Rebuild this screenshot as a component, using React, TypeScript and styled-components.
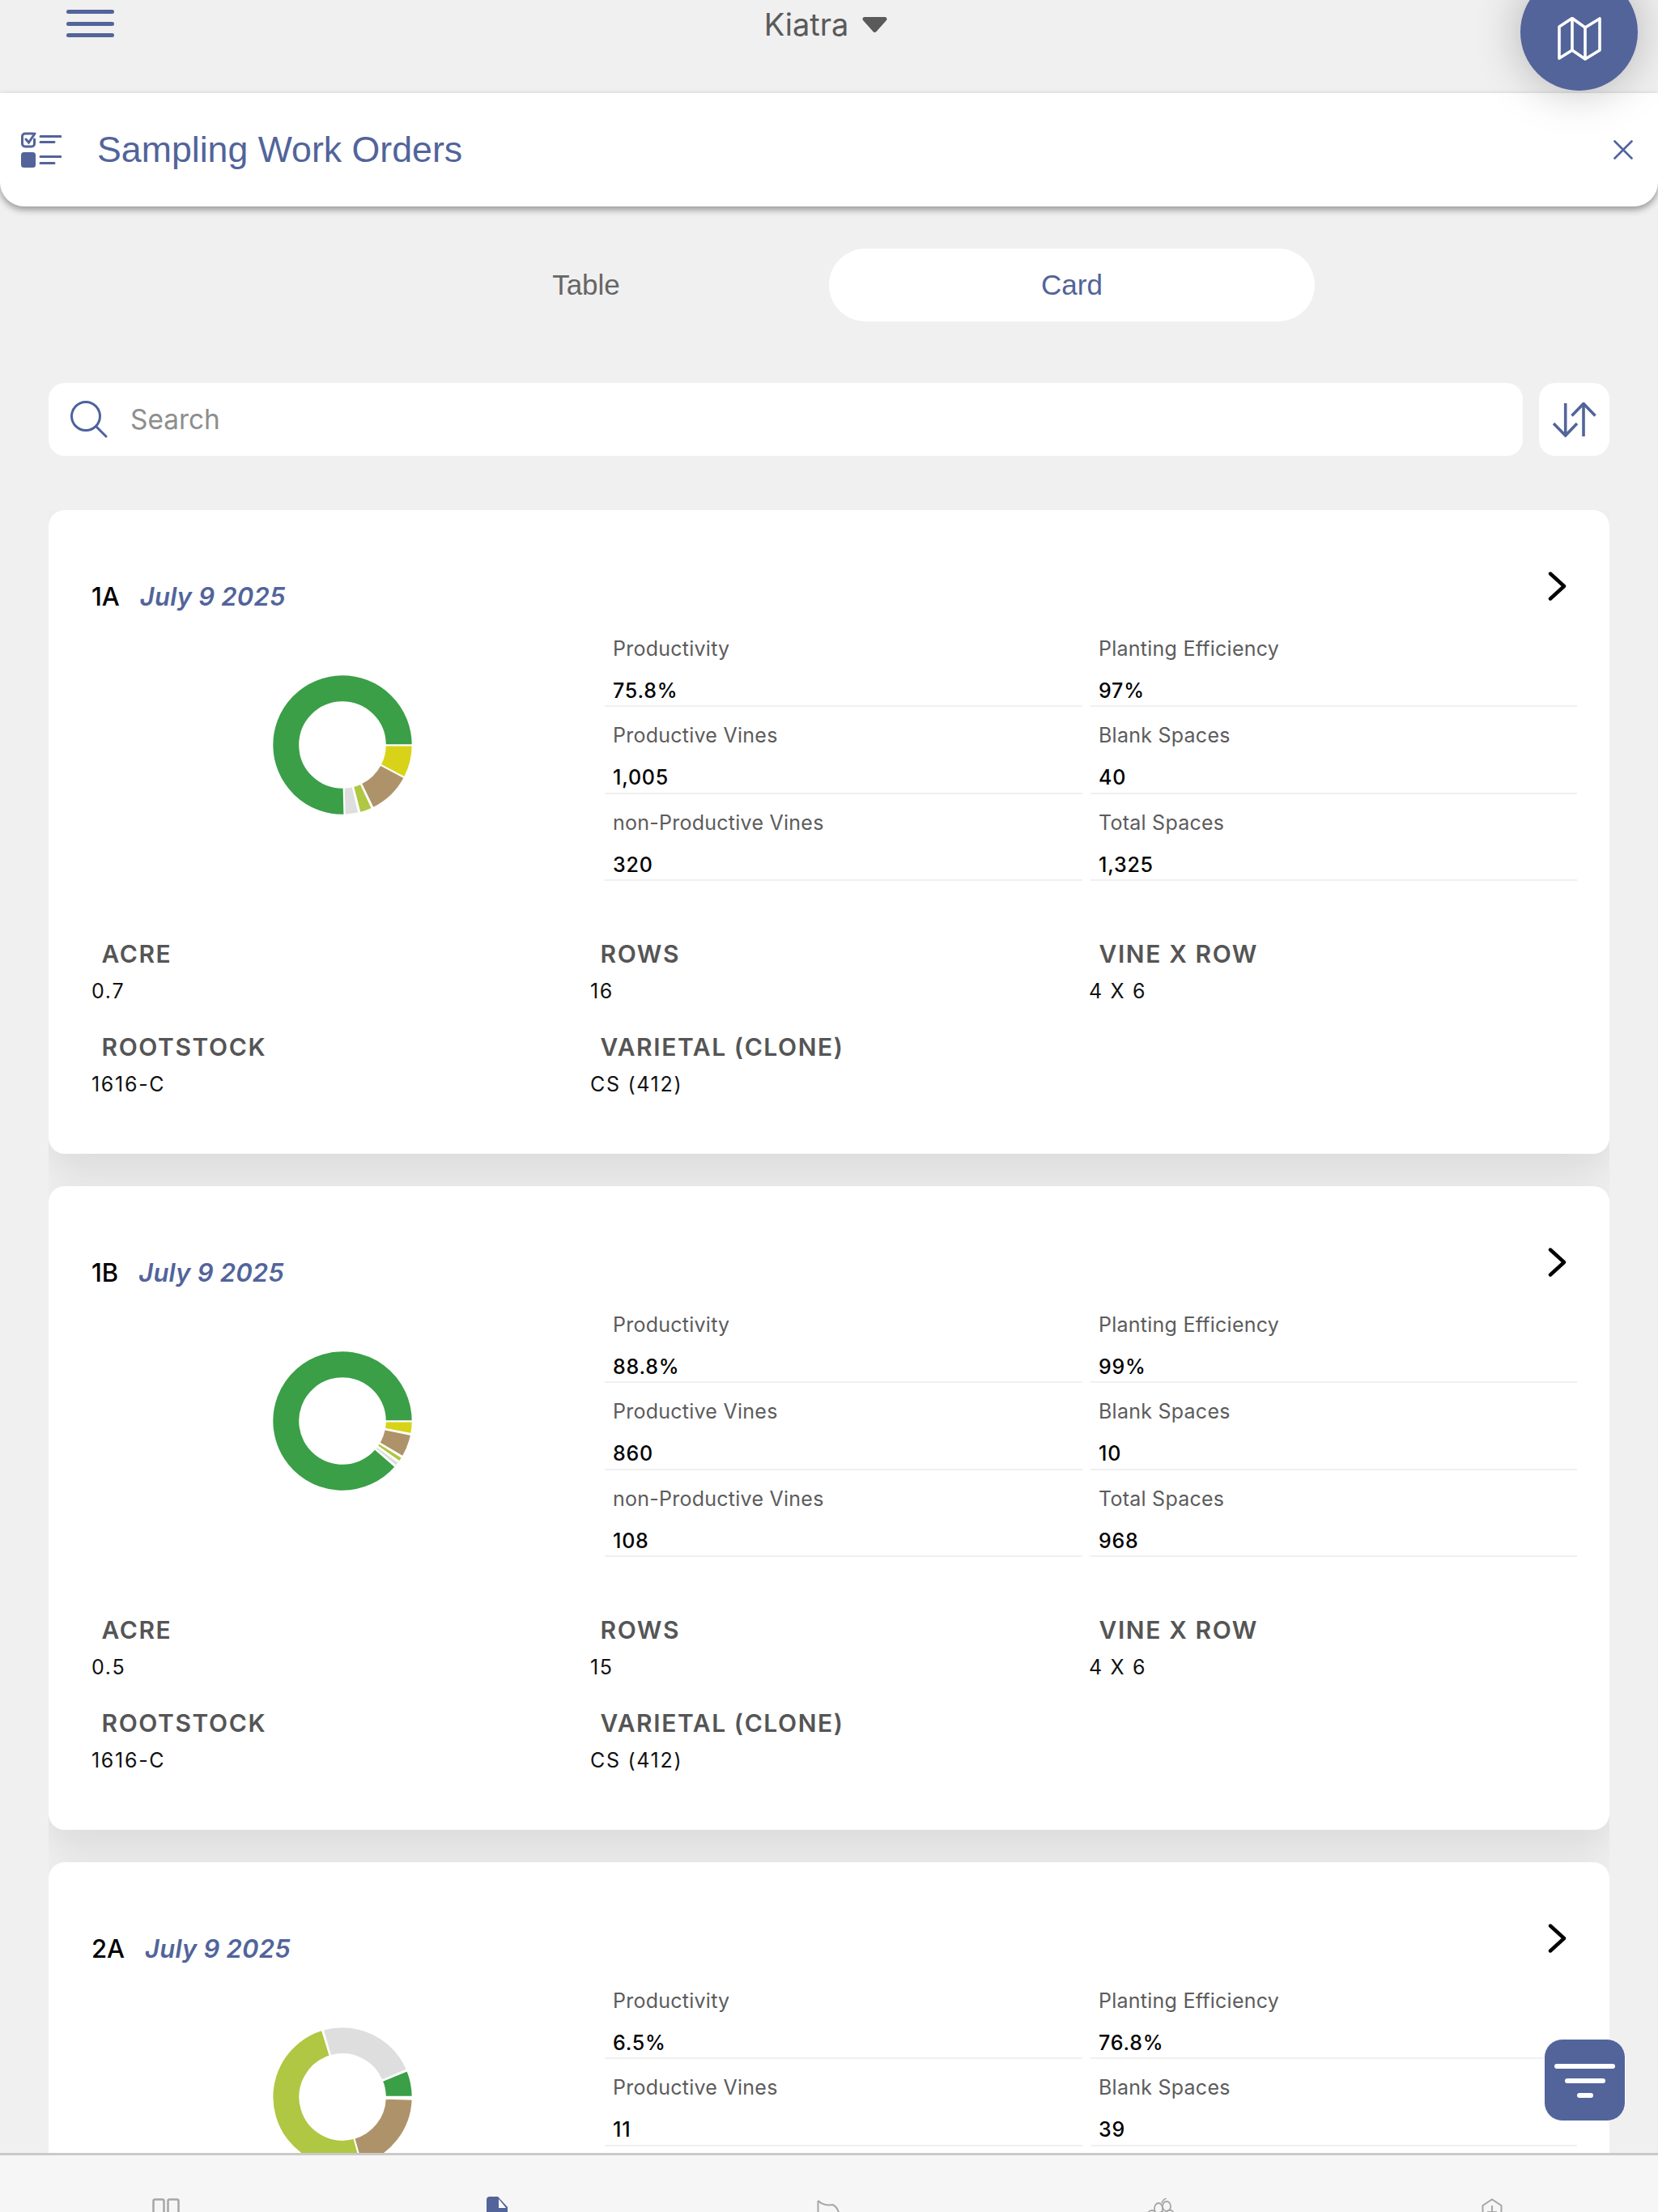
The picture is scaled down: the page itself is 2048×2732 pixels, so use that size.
import {FC} from "react";
import styled, {createGlobalStyle} from "styled-components";

const BLUE = "#52649a";
const UI_FONT = `Inter, "Noto Sans", sans-serif`;

const GlobalStyle = createGlobalStyle`
	html, body {
		margin: 0;
		padding: 0;
		background: #f0f0f0;
	}
	* {
		box-sizing: border-box;
	}
`;

// Page frame
const Page = styled.div`
	position: relative;
	width: 2048px;
	height: 2732px;
	overflow: hidden;
	display: flex;
	flex-direction: column;
	background: #f0f0f0;
	font-family: ${UI_FONT};
`;

const TopBar = styled.div`
	height: 115px;
	flex: none;
	display: grid;
	grid-template-columns: 1fr auto 1fr;
	padding: 12px 0 0 82px;
`;

const Hamburger = styled.div`
	width: 59px;
	display: flex;
	flex-direction: column;
	gap: 9.5px;

	span {
		height: 5px;
		border-radius: 3px;
		background: ${BLUE};
	}
`;

const FarmPicker = styled.div`
	display: flex;
	align-items: flex-start;
	gap: 17px;
	padding-right: 90px;
	font-size: 38px;
	line-height: 36px;
	color: #5a5a5a;

	svg {
		margin-top: 9px;
	}
`;

const MapButton = styled.div`
	position: absolute;
	z-index: 5;
	top: -33px;
	left: 1878px;
	width: 145px;
	height: 145px;
	border-radius: 50%;
	background: ${BLUE};
	box-shadow: 0 0 56px rgba(0, 0, 0, 0.26);
	display: flex;
	align-items: center;
	justify-content: center;
	padding-top: 17px;
`;

const Header = styled.div`
	height: 140px;
	flex: none;
	display: flex;
	align-items: center;
	padding: 0 31px 0 26px;
	background: #fff;
	border-radius: 0 0 30px 30px;
	box-shadow: 0 4px 9px rgba(0, 0, 0, 0.38);
`;

const HeaderTitle = styled.div`
	flex: 1;
	margin-left: 44px;
	font-family: "Liberation Sans", Arial, sans-serif;
	font-size: 44.7px;
	color: ${BLUE};
`;

const Tabs = styled.div`
	flex: none;
	width: 1200px;
	height: 90px;
	margin: 52px auto 0;
	display: grid;
	grid-template-columns: 1fr 1fr;
`;

const Tab = styled.div<{$active?: boolean}>`
	display: flex;
	align-items: center;
	justify-content: center;
	border-radius: 45px;
	font-family: "Liberation Sans", Arial, sans-serif;
	font-size: 35px;
	color: ${(p) => (p.$active ? BLUE : "#666")};
	background: ${(p) => (p.$active ? "#fff" : "transparent")};
`;

const SearchRow = styled.div`
	flex: none;
	height: 90px;
	margin: 76px 60px 0;
	display: flex;
	gap: 20px;
`;

const SearchBox = styled.div`
	flex: 1;
	display: flex;
	align-items: center;
	gap: 28px;
	padding-left: 27px;
	background: #fff;
	border-radius: 20px;
	font-size: 33.4px;
	color: #8e8e8e;
`;

const SortButton = styled.div`
	width: 87px;
	display: flex;
	align-items: center;
	justify-content: center;
	background: #fff;
	border-radius: 20px;
`;

// Card list
const List = styled.div`
	flex: 1;
	min-height: 0;
	margin: 67px 60px 0;
	overflow: hidden;
	display: flex;
	flex-direction: column;
	gap: 40px;
`;

const Card = styled.div`
	flex: none;
	min-height: 795px;
	padding: 76px 40px 70.5px 53px;
	background: #fff;
	border-radius: 20px;
	box-shadow: 0 24px 50px rgba(0, 0, 0, 0.09);
`;

const TitleRow = styled.div`
	height: 59.5px;
	display: flex;
	justify-content: space-between;
	padding-right: 13px;
`;

const Title = styled.div`
	display: flex;
	gap: 25px;
	padding-top: 11px;
	font-size: 31px;
	line-height: 40px;
	font-weight: 500;
	color: #000;
`;

const TitleDate = styled.span`
	font-weight: 600;
	font-style: italic;
	letter-spacing: 0.2px;
	color: ${BLUE};
`;

const Body = styled.div`
	display: flex;
`;

const DonutColumn = styled.div`
	flex: none;
	width: 620px;
	margin-right: 14px;
	padding-bottom: 13px;
	display: flex;
	align-items: center;
	justify-content: center;
`;

const Metrics = styled.div`
	flex: 1;
	min-height: 322.5px;
	display: grid;
	grid-template-columns: 590px 601px;
	column-gap: 10px;
	align-content: start;
`;

const Metric = styled.div`
	height: 107.5px;
	padding: 19px 10px 0;
	border-bottom: 2px solid #f0f0f0;
`;

const MetricLabel = styled.div`
	font-size: 25px;
	line-height: 32px;
	letter-spacing: 0.25px;
	color: #5c5c5c;
`;

const MetricValue = styled.div`
	margin-top: 20px;
	font-size: 25px;
	line-height: 32px;
	font-weight: 500;
	letter-spacing: 0.8px;
	color: #000;
`;

const InfoGrid = styled.div`
	margin-top: 72px;
	display: grid;
	grid-template-columns: repeat(3, 616px);
	row-gap: 36.5px;
`;

const InfoLabel = styled.div`
	padding-left: 12.5px;
	font-size: 30px;
	line-height: 36px;
	font-weight: 600;
	letter-spacing: 1.6px;
	color: #555;
`;

const InfoValue = styled.div`
	margin-top: 12.5px;
	font-size: 25px;
	line-height: 30px;
	letter-spacing: 1.7px;
	color: #111;
`;

const FilterButton = styled.div`
	position: absolute;
	z-index: 5;
	top: 2518px;
	left: 1907px;
	width: 101px;
	height: 102px;
	border: 1px solid #fff;
	border-radius: 23px;
	background: ${BLUE};
	display: flex;
	flex-direction: column;
	align-items: center;
	padding-top: 30px;
	gap: 12px;
`;

const FilterBar = styled.span<{$width: number}>`
	width: ${(p) => p.$width}px;
	height: 6px;
	border-radius: 3px;
	background: #fff;
`;

const BottomNav = styled.div`
	flex: none;
	height: 73px;
	padding-top: 53px;
	overflow: hidden;
	display: flex;
	background: #f6f6f6;
	border-top: 3px solid #c9c9c9;
`;

const NavItem = styled.div`
	flex: 1;
	display: flex;
	justify-content: center;
`;

// Icons
const TaskListIcon = () => (
	<svg width="50" height="44" viewBox="0 0 50 44" fill="none" stroke={BLUE} strokeWidth="3" strokeLinecap="round">
		<path d="M15 2H5a3.5 3.5 0 0 0-3.5 3.5v9A3.5 3.5 0 0 0 5 18h8a3.5 3.5 0 0 0 3.5-3.5V9" />
		<path d="M6 9l3.5 4L17 2" />
		<path d="M24 5.5h25M24 12.5h17M24 30.5h25M24 38.5h17" />
		<rect x="0" y="25" width="18" height="19" rx="3.5" fill={BLUE} stroke="none" />
	</svg>
);

const CloseIcon = () => (
	<svg width="24" height="24" viewBox="0 0 24 24" stroke={BLUE} strokeWidth="2.6" strokeLinecap="round">
		<path d="M1.5 1.5l21 21M22.5 1.5l-21 21" />
	</svg>
);

const MapIcon = () => (
	<svg width="54" height="54" viewBox="0 0 54 54" fill="none" stroke="#fff" strokeWidth="3.6" strokeLinejoin="round">
		<path d="M2 12L18 1.5 34 13 52 2v39L34 52 18 41 2 51z" />
		<path d="M18 1.5V41M34 13v39" />
	</svg>
);

const SearchIcon = () => (
	<svg width="46" height="46" viewBox="0 0 46 46" fill="none" stroke="#4d639f" strokeWidth="3" strokeLinecap="round">
		<circle cx="19" cy="19" r="17.5" />
		<path d="M32 32l12 12" />
	</svg>
);

const SortIcon = () => (
	<svg width="54" height="43" viewBox="0 0 54 43" fill="none" stroke={BLUE} strokeWidth="3.6">
		<path d="M15.7 1v40M1 26l14.7 15L30 26" />
		<path d="M38 42V2M23.5 16.5L38 1.5l14.5 15" />
	</svg>
);

const CaretIcon = () => (
	<svg width="31" height="19" viewBox="0 0 31 19" fill="#5a5a5a">
		<path d="M3 0h25a2.5 2.5 0 0 1 2 4L17.5 18a2.6 2.6 0 0 1-4 0L1 4a2.5 2.5 0 0 1 2-4z" />
	</svg>
);

const ChevronIcon = () => (
	<svg width="23" height="36" viewBox="0 0 23 36" fill="none" stroke="#000" strokeWidth="4.4" strokeLinecap="round" strokeLinejoin="round">
		<path d="M3 2.5L20 18 3 33.5" />
	</svg>
);

const navGrey = "#a6a6a6";

const NavIcons = [
	<svg key="a" width="34" height="24" viewBox="0 0 34 24" fill="none" stroke={navGrey} strokeWidth="2.5">
		<rect x="1.5" y="1.5" width="13" height="20" rx="2" />
		<rect x="19.5" y="1.5" width="13" height="20" rx="2" />
	</svg>,
	<svg key="b" width="26" height="24" viewBox="0 0 26 24" style={{marginTop: -2}}>
		<path d="M4 0h10l12 13v11H0V4a4 4 0 0 1 4-4z" fill={BLUE} />
		<path d="M15 3v11h9z" fill="#fff" />
	</svg>,
	<svg key="c" width="30" height="24" viewBox="0 0 30 24" fill="none" stroke={navGrey} strokeWidth="2" style={{marginTop: 2}}>
		<path d="M1.5 1v22M1.5 1c6 6 12 6 18 5 5 2 8 8 9 17" />
	</svg>,
	<svg key="d" width="34" height="24" viewBox="0 0 34 24" fill="none" stroke={navGrey} strokeWidth="1.8">
		<ellipse cx="14" cy="13" rx="5" ry="7" />
		<ellipse cx="24" cy="10" rx="5" ry="6" />
		<circle cx="6" cy="20" r="5" />
		<circle cx="18" cy="22" r="5" />
		<circle cx="28" cy="19" r="4.5" />
		<path d="M18 6C19 3 21 1 24 0" />
	</svg>,
	<svg key="e" width="26" height="24" viewBox="0 0 26 24" fill="none" stroke={navGrey} strokeWidth="2">
		<path d="M1.5 24V9L13 1.5 24.5 9v15" />
		<path d="M13 9v15M7 17h12" />
	</svg>,
];

// Donut chart
type Slice = {color: string; from: number; to: number};

const DONUT_SIZE = 176;
const OUTER = 86.5;
const INNER = 53;

const polar = (r: number, deg: number) => {
	const a = (deg * Math.PI) / 180;
	return `${(DONUT_SIZE / 2 + r * Math.cos(a)).toFixed(2)} ${(DONUT_SIZE / 2 + r * Math.sin(a)).toFixed(2)}`;
};

const slicePath = ({from, to}: Slice) => {
	const large = to - from > 180 ? 1 : 0;
	return `M${polar(OUTER, from)}A${OUTER} ${OUTER} 0 ${large} 1 ${polar(OUTER, to)}L${polar(INNER, to)}A${INNER} ${INNER} 0 ${large} 0 ${polar(INNER, from)}Z`;
};

const Donut: FC<{slices: Slice[]}> = ({slices}) => (
	<svg width={DONUT_SIZE} height={DONUT_SIZE} viewBox={`0 0 ${DONUT_SIZE} ${DONUT_SIZE}`}>
		{slices.map((s) => (
			<path key={s.from} d={slicePath(s)} fill={s.color} stroke="#fff" strokeWidth="1.6" />
		))}
	</svg>
);

const GREEN = "#3a9f47";
const YELLOW = "#d8d318";
const TAN = "#ae936a";
const LIME = "#afc743";
const GREY = "#dedede";

type Block = {
	id: string;
	date: string;
	slices: Slice[];
	metrics: [string, string][];
	info: [string, string][];
};

const blocks: Block[] = [
	{
		id: "1A",
		date: "July 9 2025",
		slices: [
			{color: YELLOW, from: 0.5, to: 27.5},
			{color: TAN, from: 28, to: 64},
			{color: LIME, from: 65, to: 75.5},
			{color: GREY, from: 76.5, to: 88},
			{color: GREEN, from: 88.5, to: 360},
		],
		metrics: [
			["Productivity", "75.8%"],
			["Planting Efficiency", "97%"],
			["Productive Vines", "1,005"],
			["Blank Spaces", "40"],
			["non-Productive Vines", "320"],
			["Total Spaces", "1,325"],
		],
		info: [
			["ACRE", "0.7"],
			["ROWS", "16"],
			["VINE X ROW", "4 X 6"],
			["ROOTSTOCK", "1616-C"],
			["VARIETAL (CLONE)", "CS (412)"],
		],
	},
	{
		id: "1B",
		date: "July 9 2025",
		slices: [
			{color: YELLOW, from: 0.5, to: 10.5},
			{color: TAN, from: 11.5, to: 30.5},
			{color: LIME, from: 31.5, to: 35.5},
			{color: GREY, from: 36.5, to: 40},
			{color: GREEN, from: 41, to: 360},
		],
		metrics: [
			["Productivity", "88.8%"],
			["Planting Efficiency", "99%"],
			["Productive Vines", "860"],
			["Blank Spaces", "10"],
			["non-Productive Vines", "108"],
			["Total Spaces", "968"],
		],
		info: [
			["ACRE", "0.5"],
			["ROWS", "15"],
			["VINE X ROW", "4 X 6"],
			["ROOTSTOCK", "1616-C"],
			["VARIETAL (CLONE)", "CS (412)"],
		],
	},
	{
		id: "2A",
		date: "July 9 2025",
		slices: [
			{color: "#666", from: 0.5, to: 1.5},
			{color: TAN, from: 2, to: 74},
			{color: LIME, from: 74.5, to: 253},
			{color: GREY, from: 254, to: 337},
			{color: GREEN, from: 338, to: 359.5},
		],
		metrics: [
			["Productivity", "6.5%"],
			["Planting Efficiency", "76.8%"],
			["Productive Vines", "11"],
			["Blank Spaces", "39"],
		],
		info: [],
	},
];

const BlockCard: FC<{block: Block}> = ({block}) => (
	<Card>
		<TitleRow>
			<Title>
				{block.id}
				<TitleDate>{block.date}</TitleDate>
			</Title>
			<ChevronIcon />
		</TitleRow>
		<Body>
			<DonutColumn>
				<Donut slices={block.slices} />
			</DonutColumn>
			<Metrics>
				{block.metrics.map(([label, value]) => (
					<Metric key={label}>
						<MetricLabel>{label}</MetricLabel>
						<MetricValue>{value}</MetricValue>
					</Metric>
				))}
			</Metrics>
		</Body>
		<InfoGrid>
			{block.info.map(([label, value]) => (
				<div key={label}>
					<InfoLabel>{label}</InfoLabel>
					<InfoValue>{value}</InfoValue>
				</div>
			))}
		</InfoGrid>
	</Card>
);

const App: FC = () => (
	<>
		<GlobalStyle />
		<Page>
			<TopBar>
				<Hamburger>
					<span />
					<span />
					<span />
				</Hamburger>
				<FarmPicker>
					Kiatra
					<CaretIcon />
				</FarmPicker>
			</TopBar>
			<MapButton>
				<MapIcon />
			</MapButton>
			<Header>
				<TaskListIcon />
				<HeaderTitle>Sampling Work Orders</HeaderTitle>
				<CloseIcon />
			</Header>
			<Tabs>
				<Tab>Table</Tab>
				<Tab $active>Card</Tab>
			</Tabs>
			<SearchRow>
				<SearchBox>
					<SearchIcon />
					Search
				</SearchBox>
				<SortButton>
					<SortIcon />
				</SortButton>
			</SearchRow>
			<List>
				{blocks.map((b) => (
					<BlockCard key={b.id} block={b} />
				))}
			</List>
			<FilterButton>
				<FilterBar $width={75} />
				<FilterBar $width={50} />
				<FilterBar $width={20} />
			</FilterButton>
			<BottomNav>
				{NavIcons.map((icon) => (
					<NavItem key={icon.key}>{icon}</NavItem>
				))}
			</BottomNav>
		</Page>
	</>
);

export default App;
